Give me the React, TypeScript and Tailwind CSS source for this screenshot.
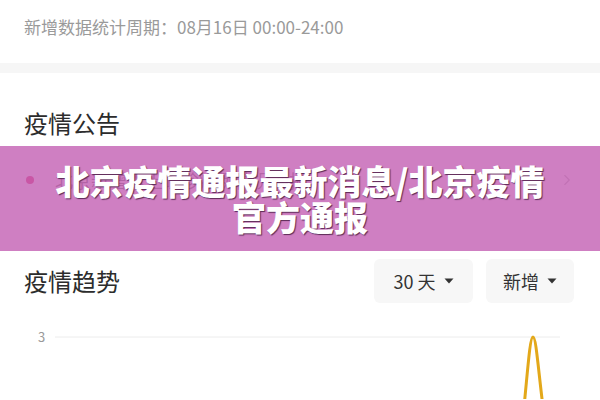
import { ChevronRight } from "lucide-react";

const font = { fontFamily: '"Noto Sans CJK SC", "Noto Sans", sans-serif' };

function Caret() {
  return (
    <svg width="10" height="6" viewBox="0 0 10 6" className="ml-2">
      <path d="M0.5 0.5 L9.5 0.5 L5 5.5 Z" fill="#333" />
    </svg>
  );
}

export default function App() {
  return (
    <div className="w-[600px] h-[400px] overflow-hidden bg-white" style={font}>
      {/* stats period */}
      <div className="h-[63px] px-6 pt-[14px]">
        <p className="text-[17px] leading-[26px] text-[#9a9a9a]">
          新增数据统计周期：08月16日 00:00-24:00
        </p>
      </div>

      <div className="h-[10px] bg-[#f6f6f6]" />

      {/* notices */}
      <div className="px-6 pt-[34px]">
        <h2 className="text-[24px] leading-[32px] text-[#2c2c2c]">疫情公告</h2>
      </div>

      <div className="relative mt-[7px] h-[105px]">
        <div className="flex h-[68px] items-center pl-[26px] pr-[24px]">
          <span className="h-[8px] w-[8px] rounded-full bg-[#e0336e]" />
          <span className="ml-[21px] flex-1 text-[18px] text-[#333]/70">
            北京新增本土确诊病例情况通报
          </span>
          <ChevronRight size={18} strokeWidth={1.5} className="text-[#bbb]" />
        </div>

        {/* title banner */}
        <div className="absolute inset-0 flex items-center justify-center bg-[#c35fb3]/80 px-8">
          <h1
            className="text-center text-[34px] font-black leading-[36px] text-white"
            style={{ textShadow: "1px 1px 1px #5a2a55" }}
          >
            北京疫情通报最新消息/北京疫情
            <br />
            官方通报
          </h1>
        </div>
      </div>

      {/* trend */}
      <div className="flex items-center justify-between pl-6 pr-[26px] pt-[8px]">
        <h2 className="text-[24px] leading-[32px] text-[#2c2c2c]">疫情趋势</h2>
        <div className="flex gap-[13px]">
          <button className="flex h-[44px] w-[99px] items-center justify-center rounded-md bg-[#f7f7f7] text-[18px] text-[#333]">
            30 天
            <Caret />
          </button>
          <button className="flex h-[44px] w-[88px] items-center justify-center rounded-md bg-[#f7f7f7] text-[18px] text-[#333]">
            新增
            <Caret />
          </button>
        </div>
      </div>

      <div className="relative mt-[24px] h-[72px]">
        <span className="absolute left-[38px] top-[2px] text-[13px] leading-[16px] text-[#999]">3</span>
        <svg width="600" height="72" className="block">
          <line x1="55" y1="10" x2="560" y2="10" stroke="#ececec" strokeWidth="1" />
          <path
            d="M524 80 C528 40, 530 10, 533 10 C536 10, 538 40, 543 80"
            fill="none"
            stroke="#e3a81a"
            strokeWidth="3"
          />
        </svg>
      </div>
    </div>
  );
}
